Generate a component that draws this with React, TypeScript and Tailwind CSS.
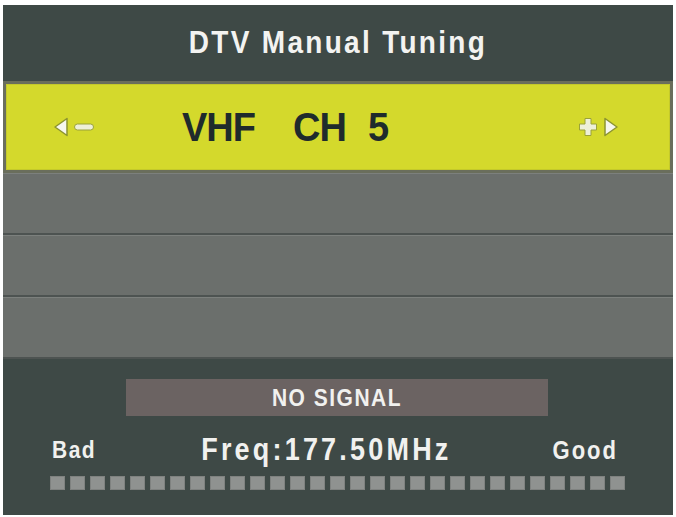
import React from "react";

const font = { fontFamily: '"Liberation Sans", Arial, sans-serif' };

function LeftArrow() {
  return (
    <svg width="16" height="22" viewBox="0 0 16 22">
      <path d="M14 2.5 L2 11 L14 19.5 Z" fill="#f6f7ee" stroke="#8c9430" strokeWidth="1.5" strokeLinejoin="round" />
    </svg>
  );
}

function RightArrow() {
  return (
    <svg width="16" height="22" viewBox="0 0 16 22">
      <path d="M2 2.5 L14 11 L2 19.5 Z" fill="#f6f7ee" stroke="#8c9430" strokeWidth="1.5" strokeLinejoin="round" />
    </svg>
  );
}

function Minus() {
  return (
    <svg width="22" height="10" viewBox="0 0 22 10">
      <rect x="1.5" y="2" width="19" height="6" rx="3" fill="#eef0d8" stroke="#9aa23a" strokeWidth="1" />
    </svg>
  );
}

function Plus() {
  return (
    <svg width="22" height="22" viewBox="0 0 22 22">
      <path
        d="M8 2.5 H14 V8 H19.5 V14 H14 V19.5 H8 V14 H2.5 V8 H8 Z"
        fill="#eef0d8"
        stroke="#9aa23a"
        strokeWidth="1"
        strokeLinejoin="round"
      />
    </svg>
  );
}

function GrayRow() {
  return <div className="h-[62px] bg-[#6b6f6c] border-t border-[#7c807d] border-b-2 border-b-[#4d5351]" />;
}

export default function App() {
  const squares = Array.from({ length: 29 });
  return (
    <div className="w-[676px] h-[517px] bg-white overflow-hidden" style={font}>
      <div className="ml-[3px] mt-[5px] w-[670px] h-[510px] bg-[#3e4946] flex flex-col">
        {/* title */}
        <div className="h-[76px] flex items-center justify-center">
          <span className="inline-block scale-y-[1.15] text-[28px] font-bold tracking-[2.3px] text-[#f3f3f1]">
            DTV Manual Tuning
          </span>
        </div>

        {/* selected row */}
        <div className="h-[92px] bg-[#6a6e5c] p-[3px]">
          <div className="h-full bg-[#d4d92c] border border-[#c4c92a] flex items-center">
            <div className="ml-[46px] flex items-center gap-[4px]">
              <LeftArrow />
              <Minus />
            </div>
            <div className="ml-[87px] flex items-center text-[38px] font-bold tracking-[-1px] text-[#1f2b2c] leading-none scale-y-[1.08]">
              <span>VHF</span>
              <span className="ml-[38px]">CH</span>
              <span className="ml-[22px]">5</span>
            </div>
            <div className="ml-auto mr-[50px] flex items-center gap-[4px]">
              <Plus />
              <RightArrow />
            </div>
          </div>
        </div>

        {/* empty rows */}
        <GrayRow />
        <GrayRow />
        <GrayRow />

        {/* signal info */}
        <div className="flex-1 flex flex-col">
          <div className="mt-[20px] ml-[123px] w-[422px] h-[37px] bg-[#6b6362] flex items-center justify-center">
            <span className="inline-block scale-y-[1.15] text-[21px] font-bold tracking-[1.5px] text-[#f1f1ef]">NO SIGNAL</span>
          </div>
          <div className="mt-[19px] h-[30px] flex items-center text-[#f1f1ef] font-bold">
            <span className="ml-[49px] inline-block scale-y-[1.15] text-[21px] tracking-[1.5px]">Bad</span>
            <span className="ml-[105px] inline-block scale-y-[1.15] text-[27px] tracking-[3.2px]">Freq:177.50MHz</span>
            <span className="ml-auto mr-[55px] inline-block scale-y-[1.15] text-[22px] tracking-[2px]">Good</span>
          </div>
          <div className="mt-[11px] ml-[47px] flex gap-[5px]">
            {squares.map((_, i) => (
              <div key={i} className="w-[15px] h-[14px] bg-[#8f9290] border border-[#7f8280]" />
            ))}
          </div>
        </div>
      </div>
    </div>
  );
}
